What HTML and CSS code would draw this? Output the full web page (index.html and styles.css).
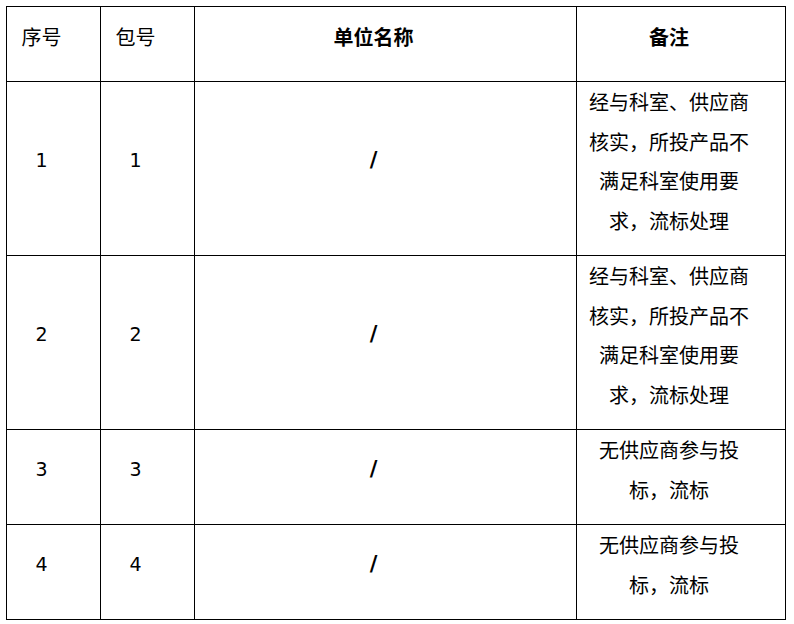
FILE: index.html
```html
<!DOCTYPE html>
<html lang="zh-CN">
<head>
<meta charset="utf-8">
<title>流标公告</title>
<link rel="stylesheet" href="styles.css">
</head>
<body>
<table class="grid">
  <colgroup>
    <col class="c-no">
    <col class="c-pkg">
    <col class="c-name">
    <col class="c-note">
  </colgroup>
  <thead>
    <tr class="head">
      <th>序号</th>
      <th>包号</th>
      <th class="strong">单位名称</th>
      <th class="strong">备注</th>
    </tr>
  </thead>
  <tbody>
    <tr>
      <td class="num">1</td>
      <td class="num">1</td>
      <td class="slash">/</td>
      <td class="note">经与科室、供应商<br>核实，所投产品不<br>满足科室使用要<br>求，流标处理</td>
    </tr>
    <tr>
      <td class="num">2</td>
      <td class="num">2</td>
      <td class="slash">/</td>
      <td class="note">经与科室、供应商<br>核实，所投产品不<br>满足科室使用要<br>求，流标处理</td>
    </tr>
    <tr>
      <td class="num">3</td>
      <td class="num">3</td>
      <td class="slash">/</td>
      <td class="note">无供应商参与投<br>标，流标</td>
    </tr>
    <tr>
      <td class="num">4</td>
      <td class="num">4</td>
      <td class="slash">/</td>
      <td class="note">无供应商参与投<br>标，流标</td>
    </tr>
  </tbody>
</table>
</body>
</html>
```

FILE: styles.css
```css
html, body {
  margin: 0;
  padding: 0;
  background: #ffffff;
}

body {
  font-family: "Noto Sans CJK SC", "Liberation Sans", sans-serif;
  color: #000000;
}

.grid {
  margin: 6px 0 0 6px;
  border-collapse: collapse;
  table-layout: fixed;
  width: 779px;
}

.c-no { width: 94px; }
.c-pkg { width: 94px; }
.c-name { width: 382px; }
.c-note { width: 209px; }

.grid th,
.grid td {
  border: 1px solid #000000;
  padding: 0 24px 15px 0;
  text-align: center;
  vertical-align: middle;
  font-size: 20px;
  line-height: 39.5px;
  font-weight: normal;
}

.head th {
  height: 59px;
}

.grid th.strong {
  font-weight: bold;
}

.grid td.num {
  font-family: "DejaVu Sans", "Noto Sans CJK SC", sans-serif;
  font-size: 19px;
}

.grid td.slash {
  font-family: "DejaVu Sans", sans-serif;
  font-weight: bold;
  font-size: 21px;
}

.grid td.note {
  white-space: nowrap;
}
```
